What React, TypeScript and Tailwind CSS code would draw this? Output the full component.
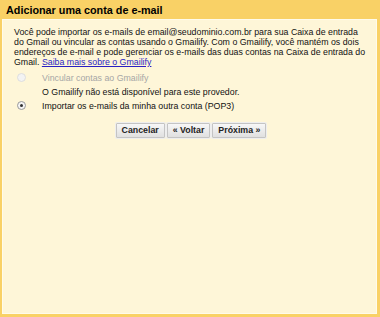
import React from 'react';

function Radio({ checked, disabled }: { checked?: boolean; disabled?: boolean }) {
  return (
    <span
      className={`inline-flex h-[9px] w-[9px] shrink-0 items-center justify-center rounded-full border ${
        disabled ? 'border-[#dedede] bg-[#f3f3f3]' : 'border-[#9a9a9a] bg-[#f4f4f4]'
      }`}
    >
      {checked && <span className="h-[3px] w-[3px] rounded-full bg-[#333]" />}
    </span>
  );
}

function Btn({ children }: { children: React.ReactNode }) {
  return (
    <button className="h-[15px] rounded-[1px] border border-[#c4c4c4] bg-gradient-to-b from-[#f7f7f7] to-[#e0e0e0] px-[5px] text-[8.8px] leading-none font-bold text-[#222] shadow-[0_0_0_1px_#eee]">
      {children}
    </button>
  );
}

export default function App() {
  return (
    <div className="h-[317px] w-[380px] bg-[#f9d166] pb-[3px] pl-[2px] pr-[3px] font-['Liberation_Sans',Arial,sans-serif]">
      <div className="flex h-full flex-col">
        <div className="h-[19px] pl-[4px] pt-[3px] text-[10.8px] leading-[14px] font-bold text-black">
          Adicionar uma conta de e-mail
        </div>
        <div className="flex-1 border border-[#fffbea] bg-[#fef6d8] pl-[11px] pr-[8px] pt-[7px] text-[8.8px] leading-[10px] text-[#111]">
          <p>
            Você pode importar os e-mails de email@seudominio.com.br para sua Caixa de entrada do Gmail ou vincular as
            contas usando o Gmailify. Com o Gmailify, você mantém os dois endereços de e-mail e pode gerenciar os
            e-mails das duas contas na Caixa de entrada do Gmail.{' '}
            <a href="#" className="inline-block leading-[10px] text-[#2a1fc4] underline">
              Saiba mais sobre o Gmailify
            </a>
          </p>
          <div className="mt-[4px] flex flex-col">
            <label className="flex h-[13px] items-center gap-[16px] pl-[3px]">
              <Radio disabled />
              <span className="text-[#a6a6a6]">Vincular contas ao Gmailify</span>
            </label>
            <div className="mt-[3px] pl-[28px] leading-[11px]">O Gmailify não está disponível para este provedor.</div>
            <label className="mt-[1px] flex h-[13px] items-center gap-[16px] pl-[3px]">
              <Radio checked />
              <span>Importar os e-mails da minha outra conta (POP3)</span>
            </label>
          </div>
          <div className="mt-[11px] flex justify-center gap-[2px]">
            <Btn>Cancelar</Btn>
            <Btn>« Voltar</Btn>
            <Btn>Próxima »</Btn>
          </div>
        </div>
      </div>
    </div>
  );
}
